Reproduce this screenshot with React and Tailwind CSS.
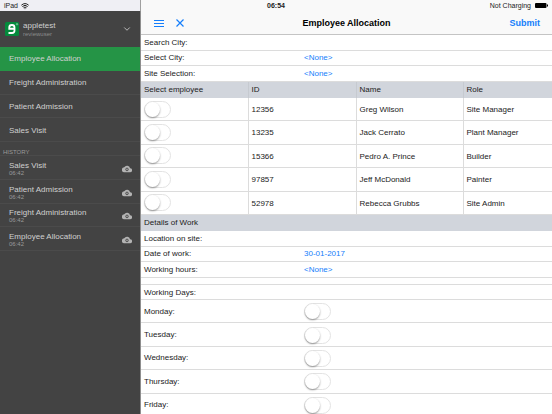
import React, { useState } from 'react';
import { ChevronDown, Wifi } from 'lucide-react';

const FORMS = ['Employee Allocation', 'Freight Administration', 'Patient Admission', 'Sales Visit'];

const HISTORY = [
  { title: 'Sales Visit', time: '06:42' },
  { title: 'Patient Admission', time: '06:42' },
  { title: 'Freight Administration', time: '06:42' },
  { title: 'Employee Allocation', time: '06:42' },
];

const EMPLOYEES = [
  { id: '12356', name: 'Greg Wilson', role: 'Site Manager' },
  { id: '13235', name: 'Jack Cerrato', role: 'Plant Manager' },
  { id: '15366', name: 'Pedro A. Prince', role: 'Builder' },
  { id: '97857', name: 'Jeff McDonald', role: 'Painter' },
  { id: '52978', name: 'Rebecca Grubbs', role: 'Site Admin' },
];

const DAYS = ['Monday', 'Tuesday', 'Wednesday', 'Thursday', 'Friday'];

const Logo = () => (
  <svg className="h-[14px] w-[14px] shrink-0" viewBox="0 0 28 28" fill="none">
    <rect width="28" height="28" rx="3" fill="#048a3c" />
    <path d="M19 13.500H8.500v-2.500a5 5 0 0 1 5-5h.5a5 5 0 0 1 5 5v6a5 5 0 0 1-5 5H7" stroke="#fff" strokeWidth="3.600" />
    <circle cx="24" cy="4.500" r="1.500" stroke="#fff" strokeWidth="0.800" />
  </svg>
);

const CloudIcon = () => (
  <svg className="h-[10px] w-[10px]" viewBox="0 0 24 24" fill="#b4b4b4">
    <path d="M19.400 10A7.500 7.500 0 0 0 5.400 8 6 6 0 0 0 6 20h13a5 5 0 0 0 .4-10z" />
    <circle cx="12" cy="13" r="3.200" fill="none" stroke="#434343" strokeWidth="2" />
    <circle cx="12" cy="13" r="1" fill="#434343" />
  </svg>
);

const Toggle = ({ id, label }) => {
  const [on, setOn] = useState(false);

  return (
    <input
      id={id}
      type="checkbox"
      role="switch"
      aria-label={label}
      checked={on}
      onChange={() => setOn(!on)}
      className="block h-[17px] w-[27px] shrink-0 appearance-none rounded-full border border-[#e3e3e3] bg-white before:block before:h-[15px] before:w-[15px] before:rounded-full before:bg-white before:shadow-[0_1px_2px_rgba(0,0,0,0.4)] checked:bg-[#4cd964] checked:before:translate-x-[10px]"
    />
  );
};

const Field = ({ id, label, children }) => (
  <div className="flex items-center border-b border-[#dcdcdc] pl-[3px] pt-px">
    <label htmlFor={id} className="w-[160px] shrink-0">{label}</label>
    {children}
  </div>
);

const Picker = ({ id }) => (
  <select id={id} className="w-[80px] appearance-none bg-transparent text-[#157efb]">
    <option>&lt;None&gt;</option>
  </select>
);

const StatusBar = () => (
  <div className="grid h-[11px] shrink-0 grid-cols-[1fr_auto_1fr] items-stretch bg-[#f9f9f9] text-[7px] leading-[11px] text-[#222]">
    <div className="flex w-[141px] items-center gap-[3px] border-r border-[#a0a0a0] bg-[#efeff4] pl-1">
      iPad
      <Wifi className="h-[8px] w-[8px]" strokeWidth={3} />
    </div>
    <div className="font-bold">06:54</div>
    <div className="flex items-center justify-end gap-1 pr-1">
      Not Charging
      <svg className="h-[5px] w-[13px]" viewBox="0 0 26 10">
        <rect width="23" height="10" rx="2" fill="#000" />
        <rect x="24" y="3" width="2" height="4" fill="#000" />
      </svg>
    </div>
  </div>
);

const Sidebar = () => (
  <aside className="w-[141px] shrink-0 border-r border-[#8e8e8e] bg-[#434343] text-[#d0d0d0]">
    <button type="button" className="flex h-9 w-full items-center gap-1 pl-[5px] pr-2 text-left">
      <Logo />
      <span className="flex-1">
        <span className="block text-[8px] leading-[9px]">appletest</span>
        <span className="block text-[6px] leading-[8px] text-[#8c8c8c]">reviewuser</span>
      </span>
      <ChevronDown className="h-[10px] w-[10px]" strokeWidth={2} />
    </button>
    <nav className="grid h-[95px] grid-rows-4">
      {FORMS.map((form, i) => (
        <a
          key={form}
          href="#"
          className={`flex items-center border-b pl-[9px] pt-[2px] ${i === 0 ? 'border-[#259446] bg-[#259446]' : 'border-[#4b4b4b]'}`}
        >
          {form}
        </a>
      ))}
    </nav>
    <h2 className="h-[14px] border-b border-[#4b4b4b] pl-[3px] pt-1 text-[6px] leading-[12px] text-[#9a9a9a]">HISTORY</h2>
    <ul className="grid h-[95px] grid-rows-4">
      {HISTORY.map(entry => (
        <li key={entry.title} className="flex items-center justify-between border-b border-[#4b4b4b] pl-[9px] pr-2 pt-[3px]">
          <span>
            <span className="block leading-[9px]">{entry.title}</span>
            <span className="block text-[6px] leading-[7px] text-[#9a9a9a]">{entry.time}</span>
          </span>
          <CloudIcon />
        </li>
      ))}
    </ul>
  </aside>
);

const EmployeeTable = () => (
  <table className="h-[133px] w-full table-fixed text-left">
    <colgroup>
      <col className="w-[107px]" />
      <col className="w-[108px]" />
      <col className="w-[107px]" />
      <col />
    </colgroup>
    <thead>
      <tr className="h-4 bg-[#d1d5dc]">
        <th className="p-0 pl-[3px] font-normal">Select employee</th>
        <th className="border-l border-[#c6cad0] p-0 pl-[3px] font-normal">ID</th>
        <th className="border-l border-[#c6cad0] p-0 pl-[3px] font-normal">Name</th>
        <th className="border-l border-[#c6cad0] p-0 pl-[3px] font-normal">Role</th>
      </tr>
    </thead>
    <tbody>
      {EMPLOYEES.map(employee => (
        <tr key={employee.id} className="border-b border-[#dcdcdc]">
          <td className="p-0 pl-[3px]">
            <Toggle id={`employee-${employee.id}`} label={employee.name} />
          </td>
          <td className="border-l border-[#dcdcdc] p-0 pl-[3px] pt-[2px]">{employee.id}</td>
          <td className="border-l border-[#dcdcdc] p-0 pl-[3px] pt-[2px]">{employee.name}</td>
          <td className="border-l border-[#dcdcdc] p-0 pl-[3px] pt-[2px]">{employee.role}</td>
        </tr>
      ))}
    </tbody>
  </table>
);

const AllocationForm = () => (
  <form id="allocation" className="text-[#222]">
    <div className="grid h-[47px] grid-rows-3">
      <Field id="search-city" label="Search City:">
        <input id="search-city" type="text" className="min-w-0 flex-1" />
      </Field>
      <Field id="city" label="Select City:">
        <Picker id="city" />
      </Field>
      <Field id="site" label="Site Selection:">
        <Picker id="site" />
      </Field>
    </div>
    <EmployeeTable />
    <h2 className="h-4 bg-[#d1d5dc] pl-[3px] leading-4">Details of Work</h2>
    <div className="grid h-[47px] grid-rows-3">
      <Field id="location" label="Location on site:">
        <input id="location" type="text" className="min-w-0 flex-1" />
      </Field>
      <Field id="date" label="Date of work:">
        <input id="date" type="text" defaultValue="30-01-2017" className="w-[80px] text-[#157efb]" />
      </Field>
      <Field id="hours" label="Working hours:">
        <Picker id="hours" />
      </Field>
    </div>
    <h3 className="mt-[6px] h-4 border-y border-[#dcdcdc] pl-[3px] leading-[15px]">Working Days:</h3>
    <div className="grid h-[117px] grid-rows-5">
      {DAYS.map(day => (
        <Field key={day} id={day} label={`${day}:`}>
          <Toggle id={day} />
        </Field>
      ))}
    </div>
  </form>
);

const App = () => (
  <div className="flex h-screen flex-col overflow-hidden bg-white font-['Liberation_Sans',Arial,sans-serif] text-[8px] leading-[10px]">
    <StatusBar />
    <div className="flex min-h-0 flex-1">
      <Sidebar />
      <main className="min-w-0 flex-1">
        <header className="grid h-6 grid-cols-[1fr_auto_1fr] items-center border-b border-[#c4c4c4] bg-[#f9f9f9] px-3">
          <div className="flex items-center gap-[10px] text-[#157efb]">
            <button type="button" aria-label="Menu">
              <svg className="h-[8px] w-[12px]" viewBox="0 0 12 8" stroke="currentColor" strokeWidth="1">
                <path d="M1 1.500h10M1 4.500h10M1 7.500h10" />
              </svg>
            </button>
            <button type="button" aria-label="Close">
              <svg className="h-[10px] w-[10px]" viewBox="0 0 20 20" stroke="currentColor" strokeWidth="2.400">
                <path d="M3 3l14 14M17 3L3 17" />
              </svg>
            </button>
          </div>
          <h1 className="text-[9px] font-bold text-black">Employee Allocation</h1>
          <button type="submit" form="allocation" className="justify-self-end text-[9px] font-bold text-[#157efb]">Submit</button>
        </header>
        <AllocationForm />
      </main>
    </div>
  </div>
);

export default App;
